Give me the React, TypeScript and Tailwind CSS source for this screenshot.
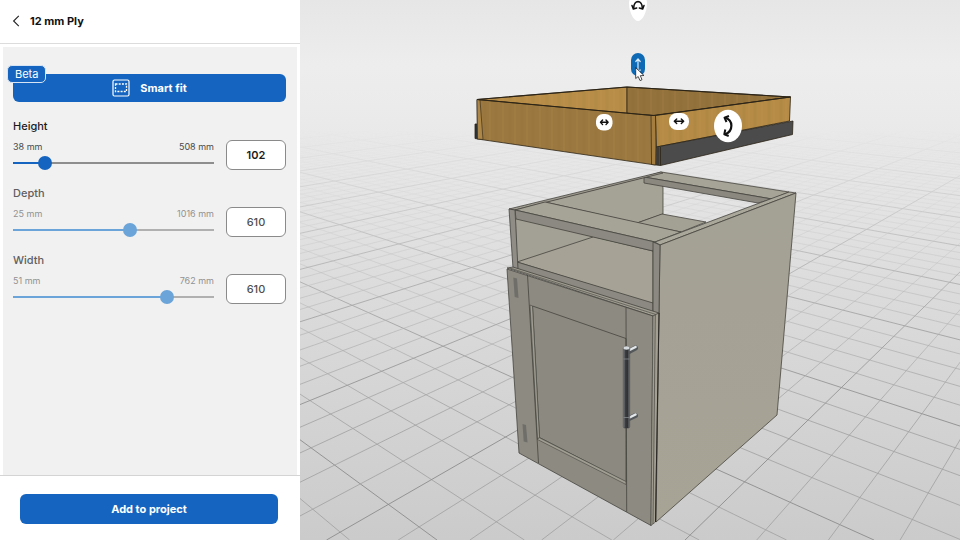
import React, { useState } from 'react';

type Dimension = {
  id: string;
  label: string;
  min: number;
  max: number;
  initial: number;
  locked: boolean;
};

const dimensions: Dimension[] = [
  { id: 'height', label: 'Height', min: 38, max: 508, initial: 102, locked: false },
  { id: 'depth', label: 'Depth', min: 25, max: 1016, initial: 610, locked: true },
  { id: 'width', label: 'Width', min: 51, max: 762, initial: 610, locked: true },
];

const DimensionField: React.FC<{ dim: Dimension }> = ({ dim }) => {
  const [value, setValue] = useState(dim.initial);
  const percent = ((value - dim.min) / (dim.max - dim.min)) * 100;
  const fill = dim.locked ? '#6ba4d9' : '#1565c0';
  const rest = dim.locked ? '#b0b0b0' : '#8e8e8e';

  return (
    <div>
      <label
        htmlFor={dim.id}
        className={`block text-[11px] leading-4 font-medium ${dim.locked ? 'text-[#5f5f5f]' : 'text-[#1c1c1c]'}`}
      >
        {dim.label}
      </label>
      <div className="mt-1.5 flex gap-3">
        <div className="flex flex-1 flex-col justify-between">
          <div className={`flex justify-between text-[9px] leading-[14px] ${dim.locked ? 'text-[#929292]' : 'text-[#4a4a4a]'}`}>
            <span>{dim.min} mm</span>
            <span>{dim.max} mm</span>
          </div>
          <input
            type="range"
            aria-label={`${dim.label} slider`}
            min={dim.min}
            max={dim.max}
            value={value}
            disabled={dim.locked}
            onChange={(e) => setValue(Number(e.target.value))}
            className={`block h-[14px] w-full appearance-none bg-size-[100%_2px] bg-center bg-no-repeat [&::-webkit-slider-thumb]:size-[14px] [&::-webkit-slider-thumb]:appearance-none [&::-webkit-slider-thumb]:rounded-full ${
              dim.locked
                ? '[&::-webkit-slider-thumb]:bg-[#6ba4d9]'
                : '[&::-webkit-slider-thumb]:bg-[#1565c0]'
            }`}
            style={{ backgroundImage: `linear-gradient(to right, ${fill} ${percent}%, ${rest} ${percent}%)` }}
          />
        </div>
        <input
          id={dim.id}
          type="text"
          inputMode="numeric"
          value={value}
          disabled={dim.locked}
          onChange={(e) => setValue(Number(e.target.value) || 0)}
          className={`h-[30px] w-[60px] rounded-md border border-[#8a8a8a] bg-white text-center text-[11px] ${
            dim.locked ? 'font-medium text-[#4f4f4f]' : 'font-semibold text-[#1c1c1c]'
          }`}
        />
      </div>
    </div>
  );
};

// Floor grid: every line of a family runs from its vanishing point
// to evenly spaced stops on the base line.
const BASE_Y = 540;
const families = [
  { vx: -260, vy: 30, start: 437, step: 87.4, from: -8, to: 60 },
  { vx: 1201, vy: 37, start: -32, step: 71.7, from: -60, to: 24 },
];

const floorLines = families.flatMap((f, i) =>
  Array.from({ length: f.to - f.from + 1 }, (_, n) => {
    const k = f.from + n;
    return { key: `${i}-${k}`, x1: f.vx, y1: f.vy, x2: f.start + f.step * k, y2: BASE_Y, major: k % 5 === 0 };
  })
);

const Floor = () => (
  <g>
    <rect x="300" width="660" height="540" fill="url(#backdrop)" />
    <g mask="url(#nearMask)">
      {floorLines.map((l) => (
        <line
          key={l.key}
          x1={l.x1}
          y1={l.y1}
          x2={l.x2}
          y2={l.y2}
          stroke={l.major ? '#8c8c8c' : '#a0a0a0'}
          strokeWidth={l.major ? 0.9 : 0.8}
          mask={l.major ? undefined : 'url(#minorMask)'}
        />
      ))}
    </g>
  </g>
);

const Cabinet = () => (
  <g stroke="#45443e" strokeWidth="0.8" strokeLinejoin="round">
    {/* carcass, seen through the top */}
    <polygon points="545,202 661,173 663,188 663,214 637,223" fill="#a5a296" />
    <polygon points="637,223 662,214 706,222 681,232" fill="#a3a094" />
    <polygon points="644,177 661,172 789,192 772,199" fill="#a6a397" />
    <polygon points="644,177 772,199 758,203 644,183" fill="#8b8880" />
    <polygon points="509,209 661,172 663,173 515,210" fill="#a19e93" />
    <polygon points="515,210 545,202 681,232 655,242" fill="#a6a397" />
    <polygon points="655,242 789,192 796,193 660,245" fill="#aaa79b" />
    <polygon points="660,245 796,193 777,415 656,522" fill="url(#sidePanel)" />
    {/* open bay */}
    <polygon points="516,218 653,251 653,304 517,262" fill="#a6a396" />
    <polygon points="516,218 593,237 517,262" fill="#a3a095" stroke="none" />
    <line x1="517" y1="262" x2="593" y2="237" />
    <polygon points="515,210 655,242 653,251 516,219" fill="#8b8981" />
    <polygon points="517,262 653,303 653,312 517,269" fill="#8b8981" />
    <polygon points="509,209 515,210 518,269 513,268" fill="#8f8d86" />
    <polygon points="653,242 660,245 659,314 653,312" fill="#8b8981" />
    {/* door */}
    <polygon points="507,268 513,267 659,313 653,316" fill="#a09d92" />
    <path d="M510 268 L656 314.500" fill="none" strokeWidth="0.6" />
    <polygon points="507,269 653,316 651,525.500 519,453" fill="#8d8a81" />
    <polygon points="653,316 659,313 655.500,522 651,525.500" fill="#a39f93" strokeWidth="0.6" />
    <path d="M655.300 315 L653 524" fill="none" strokeWidth="0.7" />
    <path d="M659 313 L655.500 522" stroke="#282724" strokeWidth="1" />
    <polygon points="532.500,306 626,338.500 626,482 539.500,437.500" fill="#8b8980" />
    <polygon points="530,305 532.500,306 539.500,437.500 537.500,439" fill="#a09d92" strokeWidth="0.6" />
    <polygon points="539,437.500 626,481.500 626,484.500 537.500,439.500" fill="#a09d92" strokeWidth="0.6" />
    <path d="M527.500 275 L538.500 463 M626 307.500 L626.700 511.700" fill="none" />
    <polygon points="513.300,277.500 517,278.500 518.500,298 514.700,297" fill="#6f6e69" stroke="none" />
    <polygon points="522.500,424 526,425 527.500,442.500 523.700,441.500" fill="#6f6e69" stroke="none" />
    {/* bar handle */}
    <g strokeLinecap="round">
      <path d="M629 351.500 L635.500 348" stroke="#55585b" strokeWidth="5" />
      <path d="M629.500 350 L635.500 347" stroke="#e4e8eb" strokeWidth="2.500" />
      <path d="M629 418.500 L635.500 415.500" stroke="#55585b" strokeWidth="5" />
      <path d="M629.500 417.500 L635.500 414.500" stroke="#e4e8eb" strokeWidth="2.500" />
    </g>
    <rect x="623.300" y="347" width="6.400" height="81" rx="1.500" fill="url(#barMetal)" stroke="#3a3b3d" strokeWidth="0.5" />
    <ellipse cx="626.500" cy="348" rx="3" ry="1.700" fill="#d4dade" stroke="none" />
    <path d="M623.500 417.500 h6 M623.500 359 h6" stroke="#85888b" />
  </g>
);

const Drawer = () => (
  <g stroke="#2c2416" strokeWidth="0.8" strokeLinejoin="round">
    <polygon points="475,124 478,124 478,139 475,138.500" fill="#2e3538" />
    <polygon points="477,99.500 627,87 627,114" fill="#b88d48" />
    <polygon points="627,87 790.500,97 655,115.500 627,114" fill="#94723c" />
    <polygon points="477,99.500 653,115.500 655.500,165 477.500,139" fill="#9b7840" />
    <polygon points="477,99.500 627,87 627,114" fill="url(#grain)" stroke="none" />
    <polygon points="627,87 790.500,97 655,115.500 627,114" fill="url(#grain)" stroke="none" />
    <polygon points="477,99.500 653,115.500 655.500,165 477.500,139" fill="url(#grain)" stroke="none" />
    <polygon points="477,99.500 480,100 483,139.500 477.500,139" fill="#ad8748" strokeWidth="0.6" />
    <polygon points="655.500,115.500 790.500,97 789.500,121 656.500,147" fill="#b58b46" />
    <polygon points="655.500,115.500 790.500,97 789.500,121 656.500,147" fill="url(#grain)" stroke="none" />
    <polygon points="651,115.500 655.500,115.500 656,165 651.500,164.500" fill="#a57d3e" strokeWidth="0.7" />
    <polygon points="656.500,147 793,121 792.500,134.500 660.500,165.500 656,165" fill="#4b4b4b" />
    <path d="M658 147.500 V165 M660.500 147 V165.500" />
    <path d="M477 99.500 L627 87 L790.500 97" fill="none" strokeWidth="1.100" />
    <path d="M477 99.500 L653 115.500 L790.500 97" fill="none" strokeWidth="1" />
  </g>
);

const Gizmos = () => (
  <g fill="none" stroke="#111" strokeWidth="1.400" strokeLinecap="round" strokeLinejoin="round">
    <g role="button" aria-label="Tilt drawer">
      <path d="M629 3 C629 -8 647 -8 647 3 C647 13 642 21 638 21 C634 21 629 13 629 3 Z" fill="#fff" stroke="none" />
      <path d="M633.700 8 C633.700 -0.500 642.300 -0.500 642.300 8" strokeWidth="1.600" />
      <path d="M632 5.500 L633.300 9 L636.700 8 M639.300 8 L642.700 9 L644 5.500" strokeWidth="1.500" />
    </g>
    <g role="button" aria-label="Move drawer up or down">
      <rect x="631" y="53" width="14" height="23" rx="7" fill="#0f6ab5" stroke="none" />
      <path d="M638 60 V71 M635.800 61.500 L638 58.800 L640.200 61.500 M635.800 70 L638 72.500 L640.200 70" stroke="#d7ebfb" strokeWidth="1.200" />
    </g>
    <g role="button" aria-label="Move drawer left or right">
      <rect x="596" y="114" width="16.500" height="16.500" rx="7" fill="#fff" stroke="none" />
      <path d="M600.800 122.300 H607.800 M602.600 120 L600.500 122.300 L602.600 124.600 M606 120 L608.100 122.300 L606 124.600" />
    </g>
    <g role="button" aria-label="Move drawer forward or back">
      <rect x="669" y="113" width="20" height="17" rx="8" fill="#fff" stroke="none" />
      <path d="M674.500 121.300 H683.500 M676.700 119 L674.300 121.300 L676.700 123.600 M681.300 119 L683.700 121.300 L681.300 123.600" />
    </g>
    <g role="button" aria-label="Rotate drawer">
      <ellipse cx="728" cy="126" rx="14" ry="16.200" fill="#fff" stroke="none" />
      <path d="M725 117.700 C733.500 120 733.500 131 725 134.300" strokeWidth="2.200" strokeLinecap="butt" />
      <path d="M729 116 L724.500 117.700 L726.500 122 M725.300 129.500 L724.300 134.300 L728.700 136" strokeWidth="2" strokeLinecap="butt" />
    </g>
    <path d="M635.700 68 V78.500 L638.200 76.500 L640 80.600 L642 79.700 L640.300 75.700 L643.600 75.500 Z" fill="#fff" stroke="#222" strokeWidth="0.8" />
  </g>
);

const Scene = () => (
  <svg viewBox="300 0 660 540" preserveAspectRatio="xMidYMid slice" className="h-full w-full" role="img" aria-label="Cabinet model">
    <defs>
      <linearGradient id="backdrop" x1="0" y1="0" x2="0" y2="1">
        <stop offset="0" stopColor="#e6e6e6" />
        <stop offset="0.12" stopColor="#ededed" />
        <stop offset="0.2" stopColor="#ebebeb" />
        <stop offset="0.32" stopColor="#e6e6e6" />
        <stop offset="0.55" stopColor="#dbdbdb" />
        <stop offset="1" stopColor="#cbcbcb" />
      </linearGradient>
      <linearGradient id="nearFade" gradientUnits="userSpaceOnUse" x1="0" y1="130" x2="0" y2="430">
        <stop offset="0" stopColor="#000" />
        <stop offset="0.2" stopColor="#383838" />
        <stop offset="0.5" stopColor="#909090" />
        <stop offset="1" stopColor="#fff" />
      </linearGradient>
      <linearGradient id="minorFade" gradientUnits="userSpaceOnUse" x1="0" y1="130" x2="0" y2="400">
        <stop offset="0" stopColor="#404040" />
        <stop offset="0.5" stopColor="#909090" />
        <stop offset="1" stopColor="#fff" />
      </linearGradient>
      <mask id="nearMask" maskUnits="userSpaceOnUse" x="300" y="0" width="660" height="540">
        <rect x="300" width="660" height="540" fill="url(#nearFade)" />
      </mask>
      <mask id="minorMask" maskUnits="userSpaceOnUse" x="300" y="0" width="660" height="540">
        <rect x="300" width="660" height="540" fill="url(#minorFade)" />
      </mask>
      <linearGradient id="sidePanel" x1="0" y1="0" x2="0" y2="1">
        <stop offset="0" stopColor="#a4a195" />
        <stop offset="1" stopColor="#a7a395" />
      </linearGradient>
      <linearGradient id="barMetal">
        <stop offset="0" stopColor="#8b8e91" />
        <stop offset="0.3" stopColor="#3c3e41" />
        <stop offset="0.65" stopColor="#2f3133" />
        <stop offset="1" stopColor="#76797c" />
      </linearGradient>
      <pattern id="grain" width="37" height="90" patternUnits="userSpaceOnUse">
        <path d="M4 0 V90 M15 0 V90 M29 0 V90" stroke="#6b4c1d" strokeOpacity="0.06" strokeWidth="3" />
        <path d="M9 0 V90 M22 0 V90 M34 0 V90" stroke="#d9ac60" strokeOpacity="0.07" strokeWidth="2" />
      </pattern>
    </defs>
    <Floor />
    <Cabinet />
    <Drawer />
    <Gizmos />
  </svg>
);

const SmartFitIcon = () => (
  <svg viewBox="0 0 18 18" className="size-[18px]" fill="none" stroke="currentColor" aria-hidden="true">
    <rect x="1" y="1" width="16" height="16" rx="1.500" strokeWidth="1.200" />
    <rect x="3.500" y="5" width="11" height="7.500" strokeWidth="1.300" strokeDasharray="2 1.200" />
  </svg>
);

const App: React.FC = () => {
  return (
    <div className="flex h-screen bg-white font-['Inter',sans-serif]">
      <aside className="flex w-[300px] shrink-0 flex-col bg-white">
        <header className="flex h-11 items-center gap-2 border-b border-[#dcdcdc] pb-0.5 pl-3">
          <button type="button" aria-label="Back" className="text-[#222]">
            <svg viewBox="0 0 10 12" className="h-3 w-[10px]" fill="none" stroke="currentColor" strokeWidth="1.100">
              <path d="M6.800 0.800 L1.600 6 L6.800 11.200" />
            </svg>
          </button>
          <h1 className="text-[11px] leading-4 font-bold text-[#111]">12 mm Ply</h1>
        </header>

        <div className="mx-[3px] mt-[3px] flex-1 bg-[#f1f1f1] pt-[27px] pr-[11px] pl-[10px]">
          <div className="relative">
            <button
              type="button"
              className="flex h-7 w-full items-center justify-center gap-[10px] rounded-md bg-[#1565c0] text-[11px] font-bold text-white"
            >
              <SmartFitIcon />
              Smart fit
            </button>
            <span className="absolute -top-[9px] -left-[6px] rounded-[5px] border border-[#d6e4f4] bg-[#1565c0] px-[7px] text-[11px] leading-4 text-white">
              Beta
            </span>
          </div>
          <div className="mt-4 flex flex-col gap-[15px]">
            {dimensions.map((dim) => (
              <DimensionField key={dim.id} dim={dim} />
            ))}
          </div>
        </div>

        <footer className="border-t border-[#d4d4d4] pt-[18px] pr-[22px] pb-4 pl-5">
          <button type="button" className="h-[30px] w-full rounded-md bg-[#1565c0] text-[11px] font-bold text-white">
            Add to project
          </button>
        </footer>
      </aside>

      <main className="min-w-0 flex-1 overflow-hidden">
        <Scene />
      </main>
    </div>
  );
};

export default App;
